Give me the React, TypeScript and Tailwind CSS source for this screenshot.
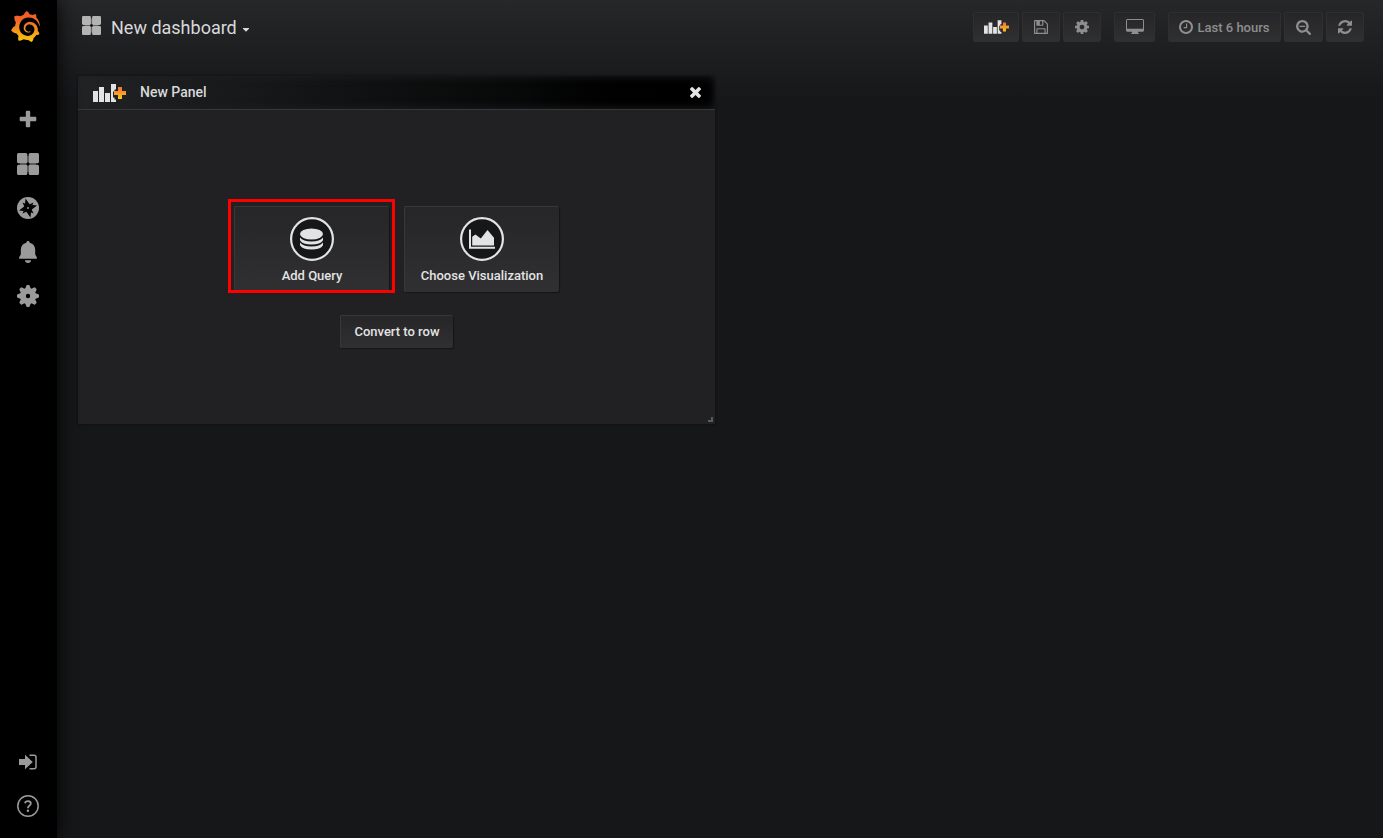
import React from 'react';
import { SiGrafana } from 'react-icons/si';

const paths = {
  save: 'M512 1536h768v-384h-768v384zm896 0h128v-896q0-14-10-38.5t-20-34.5l-281-281q-10-10-34-20t-39-10v416q0 40-28 68t-68 28h-576q-40 0-68-28t-28-68v-416h-128v1280h128v-416q0-40 28-68t68-28h832q40 0 68 28t28 68v416zm-384-928v-320q0-13-9.5-22.5t-22.5-9.5h-192q-13 0-22.5 9.5t-9.5 22.5v320q0 13 9.5 22.5t22.5 9.5h192q13 0 22.5-9.5t9.5-22.5zm640 32v928q0 40-28 68t-68 28h-1344q-40 0-68-28t-28-68v-1344q0-40 28-68t68-28h928q40 0 88 20t76 48l280 280q28 28 48 76t20 88z',
  cog: 'M1152 896q0-106-75-181t-181-75-181 75-75 181 75 181 181 75 181-75 75-181zm512-109v222q0 12-8 23t-20 13l-185 28q-19 54-39 91 35 50 107 138 10 12 10 25t-9 23q-27 37-99 108t-94 71q-12 0-26-9l-138-108q-44 23-91 38-16 136-29 186-7 28-36 28h-222q-14 0-24.5-8.5t-11.5-21.5l-28-184q-49-16-90-37l-141 107q-10 9-25 9-14 0-25-11-126-114-165-168-7-10-7-23 0-12 8-23 15-21 51-66.5t54-70.5q-27-50-41-99l-183-27q-13-2-21-12.5t-8-23.5v-222q0-12 8-23t19-13l186-28q14-46 39-92-40-57-107-138-10-12-10-24 0-10 9-23 26-36 98.5-107.5t94.5-71.5q13 0 26 10l138 107q44-23 91-38 16-136 29-186 7-28 36-28h222q14 0 24.5 8.5t11.5 21.5l28 184q49 16 90 37l142-107q9-9 24-9 13 0 25 10 129 119 165 170 7 8 7 22 0 12-8 23-15 21-51 66.5t-54 70.5q26 50 41 98l183 28q13 2 21 12.5t8 23.5z',
  clock: 'M1024 544v448q0 14-9 23t-23 9h-320q-14 0-23-9t-9-23v-64q0-14 9-23t23-9h224v-352q0-14 9-23t23-9h64q14 0 23 9t9 23zm416 352q0-148-73-273t-198-198-273-73-273 73-198 198-73 273 73 273 198 198 273 73 273-73 198-198 73-273zm224 0q0 209-103 385.5t-279.5 279.5-385.5 103-385.5-103-279.5-279.5-103-385.5 103-385.5 279.5-279.5 385.5-103 385.5 103 279.5 279.5 103 385.5z',
  zoomOut: 'M1088 800v64q0 13-9.5 22.5t-22.5 9.5h-576q-13 0-22.5-9.5t-9.5-22.5v-64q0-13 9.5-22.5t22.5-9.5h576q13 0 22.5 9.5t9.5 22.5zm128 32q0-185-131.5-316.5t-316.5-131.5-316.5 131.5-131.5 316.5 131.5 316.5 316.5 131.5 316.5-131.5 131.5-316.5zm512 832q0 53-37.5 90.5t-90.5 37.5q-54 0-90-38l-343-342q-179 124-399 124-143 0-273.5-55.5t-225-150-150-225-55.5-273.5 55.5-273.5 150-225 225-150 273.5-55.5 273.5 55.5 225 150 150 225 55.5 273.5q0 220-124 399l343 343q37 37 37 90z',
  refresh: 'M1511 928q0 5-1 7-64 268-268 434.5t-478 166.5q-146 0-282.5-55t-243.5-157l-129 129q-19 19-45 19t-45-19-19-45v-448q0-26 19-45t45-19h448q26 0 45 19t19 45-19 45l-137 137q71 66 161 102t187 36q134 0 250-65t186-179q11-17 53-117 8-23 30-23h192q13 0 22.5 9.5t9.5 22.5zm25-800v448q0 26-19 45t-45 19h-448q-26 0-45-19t-19-45 19-45l138-138q-148-137-349-137-134 0-250 65t-186 179q-11 17-53 117-8 23-30 23h-199q-13 0-22.5-9.5t-9.5-22.5v-7q65-268 270-434.5t480-166.5q146 0 284 55.5t245 156.5l130-129q19-19 45-19t45 19 19 45z',
  times: 'M1490 1322q0 40-28 68l-136 136q-28 28-68 28t-68-28l-294-294-294 294q-28 28-68 28t-68-28l-136-136q-28-28-28-68t28-68l294-294-294-294q-28-28-28-68t28-68l136-136q28-28 68-28t68 28l294 294 294-294q28-28 68-28t68 28l136 136q28 28 28 68t-28 68l-294 294 294 294q28 28 28 68z',
};

function Glyph({ d, className, viewBox = '128 128 1536 1536' }: { d: string; className: string; viewBox?: string }) {
  return (
    <svg viewBox={viewBox} className={className} fill="currentColor" aria-hidden="true">
      <path d={d} />
    </svg>
  );
}

function GridIcon({ className }: { className: string }) {
  return (
    <svg viewBox="0 0 22 22" className={className} fill="currentColor" aria-hidden="true">
      <path opacity="0.45" d="M9 3h4v16H9zM3 9h16v4H3z" />
      <rect width="10.3" height="10.3" rx="1.5" />
      <rect x="11.7" width="10.3" height="10.3" rx="1.5" />
      <rect y="11.7" width="10.3" height="10.3" rx="1.5" />
      <rect x="11.7" y="11.7" width="10.3" height="10.3" rx="1.5" />
      <circle cx="11" cy="11" r="1.4" fill="#000" />
    </svg>
  );
}

function AddPanelIcon({ className, id }: { className: string; id: string }) {
  return (
    <svg viewBox="0 0 33 18" className={className} aria-hidden="true">
      <defs>
        <linearGradient id={id} x1="0" y1="0" x2="0" y2="1">
          <stop offset="0" stopColor="#f2703b" />
          <stop offset="0.5" stopColor="#f69a2c" />
          <stop offset="1" stopColor="#fdc90d" />
        </linearGradient>
      </defs>
      <path fill="#e3e3e3" d="M0 7h5v11H0zM6 3h5v15H6zM12 9h5v9h-5zM18 0h5v5.5h-1.500v2h-1.500v6h1.500v2H23V18h-5z" />
      <path fill={`url(#${id})`} d="M25 3h4v4h4v4h-4v4h-4v-4h-4V7h4z" />
    </svg>
  );
}

function GearIcon() {
  return (
    <svg viewBox="-11 -11 22 22" className="size-[22px]" fill="currentColor" aria-hidden="true">
      <mask id="gear-hole">
        <rect x="-11" y="-11" width="22" height="22" fill="#fff" />
        <circle r="2.200" fill="#000" />
      </mask>
      <g mask="url(#gear-hole)">
        <circle r="8" />
        {[0, 45, 90, 135, 180, 225, 270, 315].map((a) => (
          <path key={a} transform={`rotate(${a})`} d="M-2.900-7L-1.700-10.300Q-1.500-11-1-11H1Q1.500-11 1.700-10.300L2.900-7z" />
        ))}
      </g>
    </svg>
  );
}

function CompassIcon() {
  return (
    <svg viewBox="-11 -11 22 22" className="size-[22px]" aria-hidden="true">
      <circle r="11" fill="currentColor" />
      <g fill="#000">
        <path d="M-2.500-9.500L2-3.200 9-2.500 3.200 2 2.500 9.500-2 3.200-9 2.500-3.200-2z" />
        <path d="M-5.500-5.500L0-3 5.500-5.500 3 0 5.500 5.500 0 3-5.500 5.500-3 0z" />
      </g>
      <circle r="0.900" fill="currentColor" />
    </svg>
  );
}

function BellIcon() {
  return (
    <svg viewBox="0 0 22 22" className="size-[22px]" fill="currentColor" aria-hidden="true">
      <path d="M11 0c1 0 1.700.7 1.700 1.700 3.600.9 5.500 3.500 5.500 7.300v4.500l1.600 2.700c.4.900.1 1.600-.8 1.600H3c-.9 0-1.200-.7-.8-1.600l1.600-2.700V9c0-3.800 1.900-6.400 5.500-7.300C9.300.7 10 0 11 0zM8 19.200h6c0 1.700-1.300 2.800-3 2.800s-3-1.100-3-2.800z" />
    </svg>
  );
}

function PlusIcon() {
  return (
    <svg viewBox="0 1 22 22" className="size-[22px]" fill="currentColor" aria-hidden="true">
      <path d="M9.800 2.800h2.400q1 0 1 1v5h5.100q1 0 1 1v2.400q0 1-1 1h-5.100v5.100q0 1-1 1H9.800q-1 0-1-1v-5.100H3.700q-1 0-1-1V9.800q0-1 1-1h5.100v-5q0-1 1-1z" />
    </svg>
  );
}

function SignInIcon() {
  return (
    <svg viewBox="0 0 18 16" className="h-4 w-[18px]" aria-hidden="true">
      <path fill="currentColor" d="M0 5h6V.8L13.800 8 6 15.200V11H0z" />
      <path fill="none" stroke="currentColor" strokeWidth="1.500" d="M10.500 1.300H15q2 0 2 2v9.400q0 2-2 2h-4.500" />
    </svg>
  );
}

function HelpIcon() {
  return (
    <svg viewBox="0 0 22 22" className="size-[22px]" fill="none" stroke="currentColor" aria-hidden="true">
      <circle cx="11" cy="11" r="10.200" strokeWidth="1.500" />
      <path strokeWidth="1.800" d="M8 8.200Q8.400 6.200 11 6.200q2.800 0 2.800 2.400 0 1.200-1.500 2.200-1.400 1-1.400 2.400" />
      <circle cx="10.900" cy="15.700" r="1.200" fill="currentColor" stroke="none" />
    </svg>
  );
}

function MonitorIcon() {
  return (
    <svg viewBox="0 0 18 16" className="h-4 w-[18px]" fill="currentColor" aria-hidden="true">
      <path fillRule="evenodd" d="M1.500 0h15Q18 0 18 1.500v9.700q0 1.500-1.500 1.500H12V14l1 .3V15H5v-.7l1-.3v-1.300H1.500Q0 12.700 0 11.200V1.500Q0 0 1.500 0zM1 1.300v8.500h16V1.300Q17 1 16.500 1h-15Q1 1 1 1.300z" />
    </svg>
  );
}

function DatabaseIcon() {
  return (
    <svg viewBox="0 0 44 44" className="size-11" aria-hidden="true">
      <circle cx="22" cy="22" r="20.900" fill="#161719" stroke="#e3e3e3" strokeWidth="2.200" />
      <g fill="#e3e3e3">
        <ellipse cx="21.500" cy="17" rx="11.500" ry="5.500" />
        <path d="M10 20.500q3 4 11.500 4t11.500-4v2.700q-2.500 4.300-11.500 4.300T10 23.200z" />
        <path d="M10 25.500q3 4 11.500 4t11.500-4v2.700q-2.500 4.300-11.500 4.300T10 28.200z" />
      </g>
    </svg>
  );
}

function AreaChartIcon() {
  return (
    <svg viewBox="0 0 44 44" className="size-11" aria-hidden="true">
      <circle cx="22" cy="22" r="20.900" fill="#161719" stroke="#e3e3e3" strokeWidth="2.200" />
      <path fill="#e3e3e3" d="M9 12.500h2v17.300h24v2H9zM12.200 28.500v-8.700l3.200-2.300 5.400 4L27.500 13l6.500 7.800v7.700z" />
    </svg>
  );
}

const navButton =
  'flex h-[30px] items-center justify-center rounded-[2px] border border-[#2f2f32] bg-linear-to-b from-[#262628] to-[#303032] text-[#8e8e8e]';
const raised =
  'rounded-[2px] border-t border-l border-[#38383b] bg-linear-to-b from-[#262628] to-[#303032] text-[13px] font-medium text-[#e3e3e3] shadow-[1px_1px_1px_#151516]';

function SideLink({ label, children }: { label: string; children: React.ReactNode }) {
  return (
    <a href="#" aria-label={label} className="flex h-11 w-full items-center justify-center">
      {children}
    </a>
  );
}

export default function App() {
  return (
    <div className="flex min-h-screen bg-[#161719] font-[Roboto,sans-serif] text-[#d8d9da]">
      <nav className="z-10 flex w-[57px] shrink-0 flex-col bg-black pr-px pb-2.5 text-[#9b9b9b] shadow-[0_0_20px_#000]">
        <a href="#" aria-label="Home" className="flex h-[53px] items-center justify-center pr-1.5">
          <svg className="absolute size-0" aria-hidden="true">
            <linearGradient id="brand" x1="0" y1="0" x2="0" y2="1">
              <stop offset="0" stopColor="#f05a28" />
              <stop offset="0.3" stopColor="#f1662a" />
              <stop offset="1" stopColor="#fcca0a" />
            </linearGradient>
          </svg>
          <SiGrafana className="size-[31px]" fill="url(#brand)" aria-hidden="true" />
        </a>
        <div className="mt-[45px] flex flex-col">
          <SideLink label="Create"><PlusIcon /></SideLink>
          <SideLink label="Dashboards"><GridIcon className="size-[22px]" /></SideLink>
          <SideLink label="Explore"><CompassIcon /></SideLink>
          <SideLink label="Alerting"><BellIcon /></SideLink>
          <SideLink label="Configuration"><GearIcon /></SideLink>
        </div>
        <div className="mt-auto flex flex-col">
          <SideLink label="Sign in"><SignInIcon /></SideLink>
          <SideLink label="Help"><HelpIcon /></SideLink>
        </div>
      </nav>

      <main className="min-w-0 flex-1 bg-linear-to-b from-[#262729] to-[#161719] to-[100px]">
        <header className="flex h-[54px] items-center justify-between pr-[19px] pl-[25px]">
          <button type="button" className="flex items-start text-[18px] leading-6">
            <GridIcon className="mt-px mr-2.5 size-[19px] text-[#b3b3b3]" />
            <span className="pt-px">New dashboard</span>
            <svg viewBox="0 0 6 4" className="mt-[13px] ml-1.5 h-1 w-1.5" fill="currentColor" aria-hidden="true">
              <path d="M0 0h6v.7L3 3.700 0 .7z" />
            </svg>
          </button>
          <div className="flex gap-[3px]">
            <button type="button" aria-label="Add panel" className={`${navButton} w-[46px]`}>
              <AddPanelIcon id="plus-nav" className="h-[14px] w-[25px]" />
            </button>
            <button type="button" aria-label="Save dashboard" className={`${navButton} w-[38px]`}>
              <Glyph d={paths.save} className="size-[14px]" />
            </button>
            <button type="button" aria-label="Dashboard settings" className={`${navButton} w-[38px]`}>
              <Glyph d={paths.cog} className="size-[14px]" />
            </button>
            <button type="button" aria-label="Cycle view mode" className={`${navButton} mx-2.5 w-[41px]`}>
              <MonitorIcon />
            </button>
            <button type="button" className={`${navButton} w-[113px] gap-1 text-[13px] font-medium`}>
              <Glyph d={paths.clock} className="size-[14px]" />
              <span className="pt-px">Last 6 hours</span>
            </button>
            <button type="button" aria-label="Time range zoom out" className={`${navButton} w-[39px]`}>
              <Glyph d={paths.zoomOut} viewBox="64 128 1664 1664" className="size-[15px]" />
            </button>
            <button type="button" aria-label="Refresh dashboard" className={`${navButton} w-[38px]`}>
              <Glyph d={paths.refresh} viewBox="0 0 1536 1536" className="size-[14px]" />
            </button>
          </div>
        </header>

        <div className="grid grid-cols-2 gap-x-2.5 pt-[22px] pr-[21px] pl-[21px]">
          <section className="relative flex h-[348px] flex-col bg-[#212124] shadow-[0_0_2px_#0b0c0e]">
            <div className="flex h-[34px] shrink-0 items-center border-b border-[#38383a] bg-linear-to-r from-[#222325] via-[#070808] via-70% to-black pr-[14px] pl-[15px] shadow-[inset_0_0_10px_#202124]">
              <AddPanelIcon id="plus-panel" className="h-[18px] w-[33px]" />
              <h2 className="ml-[14px] pb-0.5 text-[14px] leading-5 font-medium">New Panel</h2>
              <button type="button" aria-label="Remove panel" className="ml-auto text-[#e3e3e3]">
                <Glyph d={paths.times} viewBox="302 366 1188 1188" className="size-[11px]" />
              </button>
            </div>
            <div className="flex flex-1 flex-col items-center justify-center gap-[23px] pt-5">
              <div className="flex gap-[15px]">
                <div className="relative flex">
                  <button type="button" className={`${raised} flex h-[86px] w-[155px] flex-col items-center pt-2.5`}>
                    <DatabaseIcon />
                    <span className="mt-[5px] leading-5">Add Query</span>
                  </button>
                  <div className="pointer-events-none absolute -top-[7px] -right-[6px] -bottom-px -left-[6px] border-3 border-[#fd0000]" />
                </div>
                <button type="button" className={`${raised} flex h-[86px] w-[155px] flex-col items-center pt-2.5`}>
                  <AreaChartIcon />
                  <span className="mt-[5px] leading-5">Choose Visualization</span>
                </button>
              </div>
              <button type="button" className={`${raised} h-[33px] w-[113px]`}>Convert to row</button>
            </div>
            <div className="absolute right-0.5 bottom-0.5 size-[5px] border-r-2 border-b-2 border-[#5b5b5c]" />
          </section>
        </div>
      </main>
    </div>
  );
}
